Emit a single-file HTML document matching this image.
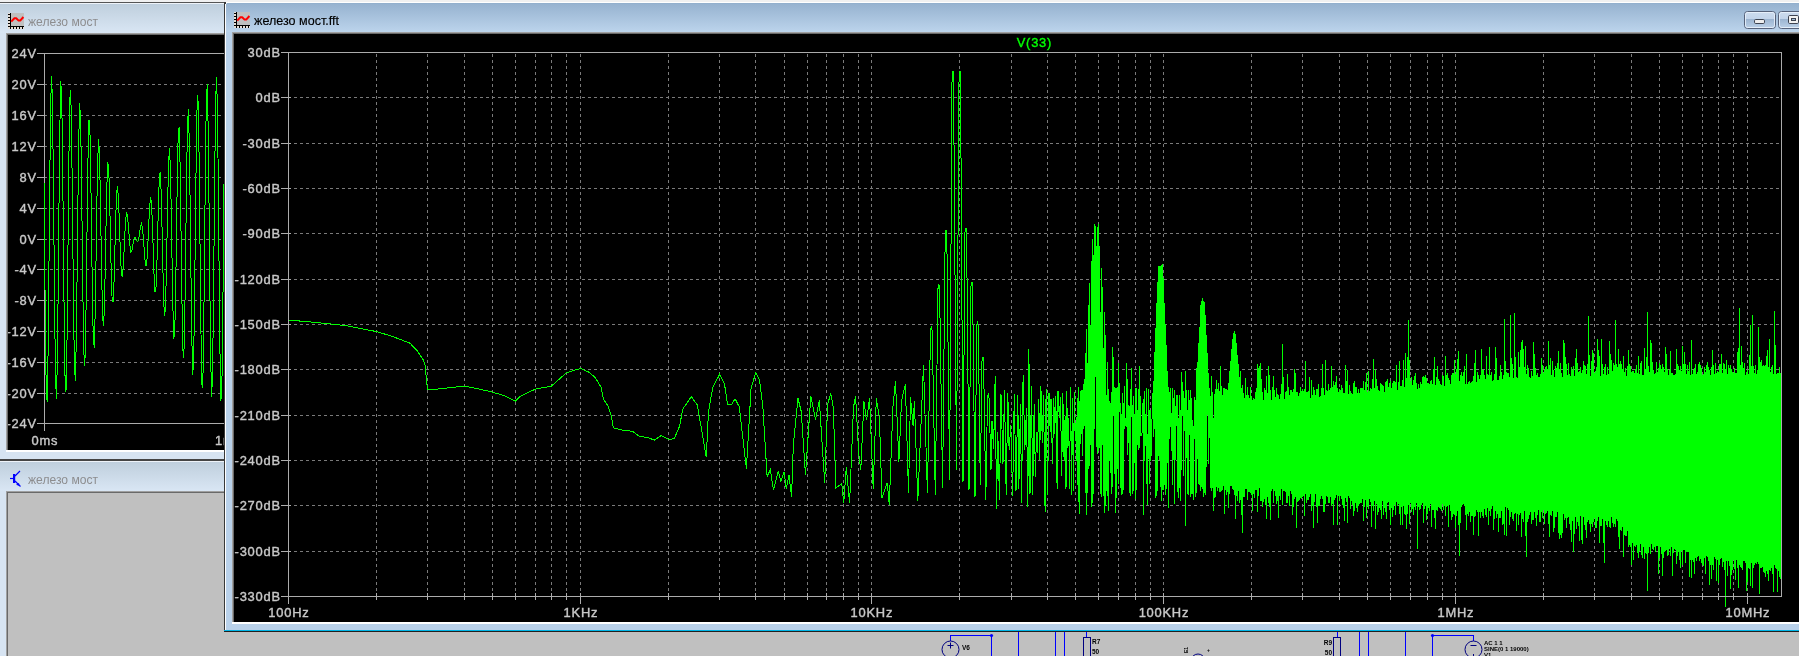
<!DOCTYPE html><html><head><meta charset="utf-8"><style>*{margin:0;padding:0}html,body{width:1799px;height:656px;overflow:hidden;background:#c0c0c0}svg{display:block;will-change:transform}</style></head><body>
<svg width="1799" height="656" viewBox="0 0 1799 656" font-family="'Liberation Sans', sans-serif">
<defs>
<linearGradient id="gAct" x1="0" y1="0" x2="0" y2="1"><stop offset="0" stop-color="#8fadcb"/><stop offset="0.04" stop-color="#97b3d0"/><stop offset="1" stop-color="#bcd4ec"/></linearGradient>
<linearGradient id="gIna" x1="0" y1="0" x2="0" y2="1"><stop offset="0" stop-color="#bfcfdd"/><stop offset="1" stop-color="#d9e6f4"/></linearGradient>
<clipPath id="cL"><rect x="8" y="35" width="216" height="415"/></clipPath>
<clipPath id="cF"><rect x="234" y="34" width="1565" height="588"/></clipPath>
</defs>
<rect x="0" y="0" width="1799" height="656" fill="#c0c0c0" />
<rect x="0" y="0" width="1799" height="2" fill="#f0f0f0" />
<rect x="0" y="2" width="224" height="458" fill="#d7e4f2" />
<rect x="0" y="2" width="224" height="1" fill="#555555" />
<rect x="0" y="3" width="224" height="1" fill="#eef3f9" />
<rect x="0" y="4" width="224" height="29" fill="url(#gIna)" />
<rect x="6" y="33" width="218" height="1" fill="#a0a0a0" />
<rect x="6" y="34" width="218" height="1" fill="#696969" />
<rect x="6" y="33" width="1" height="417" fill="#a0a0a0" />
<rect x="7" y="34" width="1" height="416" fill="#696969" />
<rect x="8" y="35" width="216" height="415" fill="#000000" />
<rect x="6" y="450" width="218" height="2" fill="#ffffff" />
<rect x="0" y="459" width="224" height="2" fill="#454545" />
<g clip-path="url(#cL)">
<path d="M45 84.5H224M45 115.5H224M45 146.5H224M45 177.5H224M45 208.5H224M45 239.5H224M45 269.5H224M45 300.5H224M45 331.5H224M45 362.5H224M45 393.5H224" stroke="#7a7a7a" stroke-width="1" stroke-dasharray="3 3" stroke-dashoffset="-5" shape-rendering="crispEdges" fill="none"/>
<path d="M44.5 53V431M44 53.5H224M44 423.5H224" stroke="#acacac" stroke-width="1" fill="none" shape-rendering="crispEdges"/>
<path d="M37 53.5H44M37 84.5H44M37 115.5H44M37 146.5H44M37 177.5H44M37 208.5H44M37 239.5H44M37 269.5H44M37 300.5H44M37 331.5H44M37 362.5H44M37 393.5H44M37 423.5H44" stroke="#acacac" stroke-width="1" shape-rendering="crispEdges"/>
<text x="36.80" y="58" font-size="13.6" fill="#c8c8c8" stroke="#c8c8c8" stroke-width="0.4" text-anchor="end" letter-spacing="0.8" transform="translate(36.80 0) scale(0.95 1) translate(-36.80 0)">24V</text>
<text x="36.80" y="89" font-size="13.6" fill="#c8c8c8" stroke="#c8c8c8" stroke-width="0.4" text-anchor="end" letter-spacing="0.8" transform="translate(36.80 0) scale(0.95 1) translate(-36.80 0)">20V</text>
<text x="36.80" y="120" font-size="13.6" fill="#c8c8c8" stroke="#c8c8c8" stroke-width="0.4" text-anchor="end" letter-spacing="0.8" transform="translate(36.80 0) scale(0.95 1) translate(-36.80 0)">16V</text>
<text x="36.80" y="151" font-size="13.6" fill="#c8c8c8" stroke="#c8c8c8" stroke-width="0.4" text-anchor="end" letter-spacing="0.8" transform="translate(36.80 0) scale(0.95 1) translate(-36.80 0)">12V</text>
<text x="36.80" y="182" font-size="13.6" fill="#c8c8c8" stroke="#c8c8c8" stroke-width="0.4" text-anchor="end" letter-spacing="0.8" transform="translate(36.80 0) scale(0.95 1) translate(-36.80 0)">8V</text>
<text x="36.80" y="213" font-size="13.6" fill="#c8c8c8" stroke="#c8c8c8" stroke-width="0.4" text-anchor="end" letter-spacing="0.8" transform="translate(36.80 0) scale(0.95 1) translate(-36.80 0)">4V</text>
<text x="36.80" y="244" font-size="13.6" fill="#c8c8c8" stroke="#c8c8c8" stroke-width="0.4" text-anchor="end" letter-spacing="0.8" transform="translate(36.80 0) scale(0.95 1) translate(-36.80 0)">0V</text>
<text x="36.80" y="274" font-size="13.6" fill="#c8c8c8" stroke="#c8c8c8" stroke-width="0.4" text-anchor="end" letter-spacing="0.8" transform="translate(36.80 0) scale(0.95 1) translate(-36.80 0)">-4V</text>
<text x="36.80" y="305" font-size="13.6" fill="#c8c8c8" stroke="#c8c8c8" stroke-width="0.4" text-anchor="end" letter-spacing="0.8" transform="translate(36.80 0) scale(0.95 1) translate(-36.80 0)">-8V</text>
<text x="36.80" y="336" font-size="13.6" fill="#c8c8c8" stroke="#c8c8c8" stroke-width="0.4" text-anchor="end" letter-spacing="0.8" transform="translate(36.80 0) scale(0.95 1) translate(-36.80 0)">-12V</text>
<text x="36.80" y="367" font-size="13.6" fill="#c8c8c8" stroke="#c8c8c8" stroke-width="0.4" text-anchor="end" letter-spacing="0.8" transform="translate(36.80 0) scale(0.95 1) translate(-36.80 0)">-16V</text>
<text x="36.80" y="398" font-size="13.6" fill="#c8c8c8" stroke="#c8c8c8" stroke-width="0.4" text-anchor="end" letter-spacing="0.8" transform="translate(36.80 0) scale(0.95 1) translate(-36.80 0)">-20V</text>
<text x="36.80" y="428" font-size="13.6" fill="#c8c8c8" stroke="#c8c8c8" stroke-width="0.4" text-anchor="end" letter-spacing="0.8" transform="translate(36.80 0) scale(0.95 1) translate(-36.80 0)">-24V</text>
<text x="44.90" y="445" font-size="13.6" fill="#c8c8c8" stroke="#c8c8c8" stroke-width="0.4" text-anchor="middle" letter-spacing="0.8" transform="translate(44.90 0) scale(0.95 1) translate(-44.90 0)">0ms</text>
<text x="215.00" y="445" font-size="13.6" fill="#c8c8c8" stroke="#c8c8c8" stroke-width="0.4" text-anchor="start" letter-spacing="0.8" transform="translate(215.00 0) scale(0.95 1) translate(-215.00 0)">1ms</text>
<path d="M44.00 180.94 45.05 294.26 46.09 381.68 47.14 402.20 48.19 346.24 49.23 240.09 50.28 133.56 51.33 76.52 52.37 95.52 53.42 181.39 54.47 293.66 55.51 379.71 56.56 399.46 57.61 344.11 58.65 240.06 59.70 136.27 60.75 81.19 61.79 100.08 62.84 183.39 63.89 291.59 64.93 373.95 65.98 392.39 67.03 339.15 68.07 240.00 69.12 141.74 70.17 90.10 71.21 108.37 72.26 186.88 73.31 288.09 74.35 364.54 75.40 381.18 76.45 331.49 77.49 239.90 78.54 149.83 79.59 103.03 80.63 120.18 81.68 191.77 82.73 283.26 83.77 351.74 84.82 366.13 85.87 321.32 86.91 239.77 87.96 160.32 89.01 119.62 90.05 135.19 91.10 197.94 92.15 277.23 93.19 335.89 94.24 347.65 95.29 308.93 96.33 239.62 97.38 172.93 98.43 139.42 99.47 152.99 100.52 205.20 101.57 270.16 102.61 317.42 103.66 326.23 104.71 294.64 105.75 239.45 106.80 187.31 107.85 161.90 108.89 173.11 109.94 213.37 110.99 262.25 112.03 296.84 113.08 302.45 114.13 278.85 115.17 239.26 116.22 203.09 117.27 186.46 118.31 195.00 119.36 222.22 120.41 253.71 121.45 274.69 122.50 276.95 123.55 261.98 124.59 239.06 125.64 219.82 126.69 212.42 127.73 218.07 128.78 231.52 129.83 244.76 130.87 251.57 131.92 250.43 132.97 244.49 134.01 238.84 135.06 237.07 136.11 239.10 137.15 241.70 138.20 241.02 139.25 235.66 140.29 228.10 141.34 223.59 142.39 226.84 143.43 238.63 144.48 254.36 145.53 265.77 146.57 265.25 147.62 250.46 148.67 226.64 149.71 204.93 150.76 197.16 151.81 209.51 152.85 238.43 153.90 271.24 154.95 291.72 155.99 288.09 157.04 259.58 158.09 217.94 159.13 182.67 160.18 171.86 161.23 192.98 162.27 238.23 163.32 287.24 164.37 316.23 165.41 309.60 166.46 268.15 167.51 209.81 168.55 161.92 169.60 148.36 170.65 177.68 171.69 238.05 172.74 301.93 173.79 338.66 174.83 329.20 175.88 275.92 176.93 202.46 177.97 143.25 179.02 127.30 180.07 164.03 181.11 237.89 182.16 314.92 183.21 358.40 184.25 346.36 185.30 282.69 186.35 196.09 187.39 127.15 188.44 109.25 189.49 152.39 190.53 237.75 191.58 325.86 192.63 374.91 193.67 360.62 194.72 288.28 195.77 190.88 196.81 114.06 197.86 94.69 198.91 143.08 199.95 237.64 201.00 334.45 202.05 387.75 203.09 371.60 204.14 292.53 205.19 186.95 206.23 104.34 207.28 84.02 208.33 136.36 209.37 237.56 210.42 340.46 211.47 396.57 212.51 378.99 213.56 295.33 214.61 184.42 215.65 98.25 216.70 77.52 217.75 132.40 218.79 237.52 219.84 343.73 220.89 401.13 221.93 382.60 222.98 296.61 224.03 183.36 225.07 95.94" stroke="#00ff00" stroke-width="1" fill="none" shape-rendering="crispEdges"/>
</g>
<rect x="0" y="461" width="224" height="195" fill="#d7e4f2" />
<rect x="0" y="461" width="224" height="1" fill="#eef3f9" />
<rect x="0" y="462" width="224" height="29" fill="url(#gIna)" />
<rect x="6" y="491" width="218" height="1" fill="#a0a0a0" />
<rect x="6" y="492" width="218" height="1" fill="#696969" />
<rect x="6" y="491" width="1" height="165" fill="#a0a0a0" />
<rect x="7" y="492" width="1" height="164" fill="#696969" />
<rect x="8" y="493" width="216" height="163" fill="#c0c0c0" />
<rect x="224" y="2" width="1575" height="630" fill="#b9d1ea" />
<rect x="226" y="2" width="1573" height="1" fill="#ffffff" />
<rect x="224" y="4" width="1" height="628" fill="#383838" />
<rect x="225" y="4" width="1" height="627" fill="#ffffff" />
<rect x="226" y="3" width="1573" height="29" fill="url(#gAct)" />
<rect x="224" y="2" width="2" height="2" fill="#3a3a3a" />
<rect x="226" y="3" width="1" height="1" fill="#e0e8f0" />
<rect x="224" y="630" width="1575" height="1" fill="#00b4e6" />
<rect x="224" y="631" width="1575" height="1" fill="#202020" />
<rect x="232" y="32" width="1567" height="1" fill="#a0a0a0" />
<rect x="232" y="33" width="1567" height="1" fill="#696969" />
<rect x="232" y="32" width="1" height="590" fill="#a0a0a0" />
<rect x="233" y="33" width="1" height="589" fill="#696969" />
<rect x="234" y="34" width="1565" height="588" fill="#000000" />
<rect x="232" y="622" width="1567" height="2" fill="#ffffff" />
<g clip-path="url(#cF)">
<path d="M289 97.5H1781M289 143.5H1781M289 188.5H1781M289 233.5H1781M289 279.5H1781M289 324.5H1781M289 369.5H1781M289 415.5H1781M289 460.5H1781M289 505.5H1781M289 551.5H1781" stroke="#7a7a7a" stroke-width="1" stroke-dasharray="3 3" stroke-dashoffset="-5" shape-rendering="crispEdges" fill="none"/>
<path d="M376.5 54V596M427.5 54V596M464.5 54V596M492.5 54V596M515.5 54V596M535.5 54V596M551.5 54V596M566.5 54V596M580.5 54V596M668.5 54V596M719.5 54V596M755.5 54V596M784.5 54V596M807.5 54V596M826.5 54V596M843.5 54V596M858.5 54V596M871.5 54V596M959.5 54V596M1011.5 54V596M1047.5 54V596M1075.5 54V596M1098.5 54V596M1118.5 54V596M1135.5 54V596M1150.5 54V596M1163.5 54V596M1251.5 54V596M1302.5 54V596M1339.5 54V596M1367.5 54V596M1390.5 54V596M1410.5 54V596M1427.5 54V596M1442.5 54V596M1455.5 54V596M1543.5 54V596M1594.5 54V596M1631.5 54V596M1659.5 54V596M1682.5 54V596M1702.5 54V596M1718.5 54V596M1733.5 54V596M1747.5 54V596" stroke="#7a7a7a" stroke-width="1" stroke-dasharray="3 3" shape-rendering="crispEdges" fill="none"/>
<path d="M288.4 320.4 295.7 320.7 307.9 321.7 330.7 324.0 346.0 325.7 361.2 328.6 376.5 331.6 391.7 336.2 410.0 343.2 417.6 351.2 423.0 359.5 425.0 364.9 426.5 380.1 427.5 390.0 432.9 389.6 449.6 387.7 463.4 386.2 469.4 387.0 480.0 389.3 492.2 392.0 504.4 395.8 515.4 401.2 520.4 396.3 534.9 389.3 542.5 387.7 551.3 386.2 566.1 373.0 573.0 370.7 580.6 368.4 589.0 372.2 595.1 377.5 601.2 387.4 603.5 399.6 608.0 405.7 611.1 414.9 613.4 427.8 622.5 430.1 632.4 431.3 639.3 436.2 647.7 437.7 654.5 440.0 661.4 435.5 669.0 439.6 674.3 438.5 679.6 426.1 682.8 409.1 691.3 396.7 697.3 404.8 706.3 457.1 708.4 412.3 712.7 387.7 719.5 374.5 724.4 383.5 727.6 404.4 731.4 404.8 735.1 398.8 739.3 406.9 746.4 468.8 751.1 387.7 755.8 372.8 759.6 380.3 762.8 405.9 767.1 476.3 770.3 469.9 773.5 490.1 778.2 470.9 780.9 481.6 784.1 472.0 786.3 489.1 789.0 475.2 791.6 496.5 793.3 445.3 798.0 398.4 801.2 411.2 805.5 475.2 810.8 395.8 815.5 419.7 819.3 400.5 824.7 482.7 827.6 404.8 830.7 393.1 833.3 407.4 835.9 487.7 841.8 483.9 843.7 503.3 846.3 467.0 849.6 503.3 853.5 407.4 855.6 395.7 858.7 454.0 860.8 469.6 863.9 400.9 866.5 420.4 869.6 398.3 873.2 489.0 876.3 398.3 879.4 417.8 882.0 498.1 887.2 482.6 889.3 504.6 892.9 407.4 895.5 381.5 898.9 461.8 901.5 400.9 905.4 384.1 908.5 492.9 910.5 397.0 913.1 425.5 914.4 400.9 917.8 500.7 923.5 364.6 927.4 492.9 930.6 329.8 931.6 325.8 932.2 331.8 935.3 495.0 938.0 288.6 939.0 284.6 939.6 290.6 942.6 488.0 945.2 233.6 946.2 229.6 946.8 235.6 949.6 480.0 952.0 82.6 953.0 70.6 953.6 90.6 956.5 470.0 959.0 82.6 960.0 70.6 960.6 90.6 963.0 482.0 965.0 232.0 966.0 228.0 966.6 234.0 969.0 490.0 971.0 285.8 972.0 281.8 972.6 287.8 975.0 497.0 976.7 325.6 977.7 321.6 978.3 327.6 980.3 485.0 982.0 361.4 983.0 357.4 983.6 363.4 985.8 500.0 987.5 397.0 988.5 393.0 989.1 399.0 991.0 470.0 992.0 420.7 993.6 448.8 995.2 375.8 996.5 509.3 997.8 432.0 999.5 500.1 1001.0 394.0 1003.0 463.6 1004.5 390.3 1006.2 495.1 1007.8 393.2 1009.1 449.8 1010.8 425.2 1012.6 496.3 1014.3 393.9 1016.0 490.6 1017.8 394.8 1018.8 489.4 1020.5 403.8 1021.5 502.5 1023.1 374.9 1024.8 450.0 1026.5 407.8 1027.8 506.7 1028.9 349.4 1030.0 493.7 1031.4 386.4 1032.7 495.2 1034.2 404.0 1035.4 477.0 1036.5 432.2 1037.5 453.3 1038.8 399.5 1039.7 459.8 1040.9 385.9 1042.3 442.7 1043.5 395.3 1045.1 511.9 1046.1 388.6 1047.5 495.3 1049.0 392.7 1050.2 432.0 1051.0 398.6 1052.5 464.2 1053.8 398.0 1054.7 434.1 1055.8 395.9 1057.1 488.7 1058.0 391.0 1059.3 418.2 1060.5 396.9 1061.7 476.1 1062.8 392.7 1064.1 460.6 1065.1 416.0 1066.0 489.0 1066.7 391.2 1067.8 448.4 1068.7 417.9 1069.5 488.6 1070.6 386.8 1071.6 494.8 1072.4 398.0 1073.4 491.2 1074.3 391.9 1075.2 440.6 1076.3 416.7 1077.4 485.0 1078.1 387.4 1079.1 513.9 1080.1 390.8 1080.8 443.5 1082.0 389.6 1082.8 455.5 1083.4 384.4 1084.3 426.4 1085.4 353.3 1086.1 514.5 1086.8 328.9 1087.8 492.9 1088.4 305.0 1089.0 468.6 1089.8 282.6 1090.6 444.5 1091.3 261.2 1092.0 506.5 1092.8 238.8 1093.4 493.6 1094.1 224.0 1094.8 428.8 1095.6 226.4 1096.2 447.1 1097.1 226.9 1097.7 453.8 1098.5 224.3 1099.0 451.0 1099.8 246.0 1100.3 494.0 1101.2 268.5 1101.9 496.5 1102.4 286.9 1103.3 495.6 1104.2 311.8 1105.0 513.0 1105.7 335.4 1106.5 491.0 1107.3 361.8 1108.1 511.3 1108.9 388.8 1109.6 460.5 1110.4 403.2 1111.2 493.7 1111.8 391.6 1112.3 486.8 1112.9 347.5 1113.7 415.5 1114.6 387.1 1115.2 512.8 1116.0 388.4 1116.8 498.1 1117.5 387.1 1118.1 484.0 1118.7 363.0 1119.5 412.1 1120.3 402.9 1121.0 488.0 1121.5 414.3 1122.0 495.4 1122.8 392.9 1123.6 490.3 1124.1 385.9 1124.8 429.0 1125.3 420.8 1126.1 418.1 1126.6 363.5 1127.2 454.8 1127.8 379.1 1128.3 442.9 1129.1 435.2 1129.6 492.8 1130.1 388.8 1130.6 495.9 1131.2 368.3 1131.7 416.8 1132.3 405.1 1133.0 493.5 1133.5 396.0 1134.1 417.2 1134.7 423.6 1135.3 499.3 1136.0 388.5 1136.6 490.4 1137.1 410.0 1137.7 444.6 1138.4 389.0 1139.0 449.7 1139.7 366.3 1140.3 423.7 1140.9 434.7 1141.4 433.8 1141.9 435.5 1142.6 418.6 1143.1 399.4 1143.8 514.8 1144.3 390.7 1144.8 454.2 1145.3 413.9 1145.9 446.2 1146.6 388.2 1147.1 505.4 1147.7 433.7 1148.3 459.3 1148.8 389.2 1149.5 484.1 1150.0 409.7 1150.6 460.7 1151.1 430.3 1151.6 456.2 1152.2 402.6 1152.7 413.3 1153.2 380.8 1153.8 436.7 1154.3 352.2 1154.9 429.0 1155.5 328.5 1156.0 497.9 1156.5 303.1 1157.0 495.8 1157.5 282.5 1158.0 460.1 1158.6 266.1 1159.1 460.4 1159.6 266.4 1160.1 486.8 1160.6 265.8 1161.1 500.9 1161.6 264.6 1162.1 489.8 1162.6 264.0 1163.2 489.9 1163.7 278.0 1164.2 485.2 1164.7 302.9 1165.2 495.3 1165.7 323.7 1166.2 489.4 1166.7 345.4 1167.2 462.8 1167.7 370.9 1168.2 508.1 1168.8 387.3 1169.3 439.1 1169.8 392.0 1170.3 427.4 1170.8 388.2 1171.3 448.3 1171.8 427.4 1172.3 484.8 1172.8 387.6 1173.3 413.2 1173.8 429.3 1174.3 504.3 1174.9 389.6 1175.4 459.9 1175.9 407.4 1176.4 426.0 1176.9 394.7 1177.4 492.1 1177.9 394.6 1178.4 497.9 1178.9 427.8 1179.4 487.6 1179.9 395.1 1180.4 500.7 1180.9 409.8 1181.4 470.1 1181.9 371.8 1182.4 416.1 1182.9 383.5 1183.4 476.3 1183.9 390.7 1184.4 418.3 1184.9 403.9 1185.4 525.8 1185.9 371.3 1186.4 457.5 1186.9 396.8 1187.4 494.4 1187.9 410.0 1188.4 494.5 1188.9 389.6 1189.4 435.3 1189.9 411.0 1190.4 497.2 1190.9 390.5 1191.4 493.7 1191.9 397.7 1192.4 494.1 1192.9 433.8 1193.4 499.9 1193.9 426.2 1194.4 438.6 1194.9 397.4 1195.4 496.8 1195.9 400.2 1196.4 492.8 1196.9 367.8 1197.4 458.6 1197.9 361.7 1198.4 484.4 1198.9 343.4 1199.4 485.3 1199.9 327.1 1200.4 490.9 1200.9 305.0 1201.4 487.1 1201.9 301.5 1202.4 489.1 1202.9 298.1 1203.4 496.8 1203.9 300.7 1204.4 493.3 1204.9 301.7 1205.4 495.2 1205.9 315.5 1206.4 467.3 1206.9 334.7 1207.4 414.9 1207.9 355.2 1208.4 464.1 1208.9 373.5 1209.4 438.3 1209.9 391.4 1210.4 487.8 1210.9 395.9 1211.4 491.1 1211.9 376.1 1212.4 488.3 1212.9 391.9 1213.4 510.6 1213.9 421.2 1214.4 498.1 1214.9 393.8 1215.4 496.6 1215.9 389.1 1216.4 486.7 1216.9 379.6 1217.4 491.0 1217.9 389.4 1218.4 488.2 1218.9 383.1 1219.4 491.8 1219.9 391.2 1220.4 491.8 1220.9 366.3 1221.4 490.6 1221.9 386.2 1222.4 489.6 1222.9 395.5 1223.4 486.3 1223.9 388.3 1224.4 513.8 1224.9 387.7 1225.4 490.4 1225.9 388.7 1226.4 495.0 1226.9 389.1 1227.4 491.9 1227.9 389.6 1228.4 508.2 1228.9 382.7 1229.4 493.7 1229.9 371.1 1230.4 486.3 1230.9 361.2 1231.4 486.4 1231.9 349.0 1232.4 489.0 1232.9 338.8 1233.4 489.9 1233.9 332.6 1234.4 495.0 1234.9 331.2 1235.4 519.0 1235.9 334.1 1236.4 496.0 1236.9 343.1 1237.4 501.0 1237.9 355.3 1238.4 490.6 1238.9 363.6 1239.4 502.6 1239.9 377.3 1240.4 500.3 1240.9 371.0 1241.4 514.7 1241.9 387.8 1242.4 532.6 1242.9 385.3 1243.4 496.9 1243.9 393.0 1244.4 496.8 1244.9 398.0 1245.4 489.2 1245.9 377.8 1246.4 488.9 1246.9 395.4 1247.4 500.2 1247.9 387.4 1248.4 491.7 1248.9 395.0 1249.4 492.4 1249.9 397.9 1250.4 493.1 1250.9 387.2 1251.4 495.2 1251.9 396.2 1252.4 511.2 1252.9 399.7 1253.4 493.9 1253.9 397.8 1254.4 498.2 1254.9 399.1 1255.4 490.1 1255.9 391.8 1256.4 489.6 1256.9 388.2 1257.4 512.3 1257.9 363.6 1258.4 495.6 1258.9 367.6 1259.4 488.2 1259.9 366.4 1260.4 500.5 1260.9 363.3 1261.4 501.2 1261.9 379.5 1262.4 506.5 1262.9 392.4 1263.4 501.8 1263.9 400.0 1264.4 498.6 1264.9 388.5 1265.4 504.7 1265.9 389.6 1266.4 519.0 1266.9 376.1 1267.4 497.0 1267.9 393.5 1268.4 503.3 1268.9 366.0 1269.4 507.2 1269.9 375.1 1270.4 520.0 1270.9 389.8 1271.4 491.3 1271.9 399.8 1272.4 489.3 1272.9 387.1 1273.4 502.6 1273.9 376.5 1274.4 490.6 1274.9 389.7 1275.4 495.6 1275.9 396.9 1276.4 504.0 1276.9 387.7 1277.4 500.9 1277.9 393.6 1278.4 517.9 1278.9 395.3 1279.4 496.2 1279.9 399.1 1280.4 499.6 1280.9 393.9 1281.4 489.4 1281.9 384.4 1282.4 505.0 1282.9 344.4 1283.4 490.8 1283.9 383.7 1284.4 491.1 1284.9 398.6 1285.4 491.8 1285.9 392.4 1286.4 502.8 1286.9 391.1 1287.4 502.5 1287.9 373.9 1288.4 495.7 1288.9 387.2 1289.4 506.4 1289.9 395.0 1290.4 490.5 1290.9 389.9 1291.4 493.6 1291.9 390.0 1292.4 514.9 1292.9 392.5 1293.4 506.7 1293.9 389.2 1294.4 499.0 1294.9 368.7 1295.4 497.1 1295.9 373.4 1296.4 527.5 1296.9 392.5 1297.4 501.5 1297.9 391.7 1298.4 501.1 1298.9 395.8 1299.4 500.4 1299.9 392.6 1300.4 497.7 1300.9 387.0 1301.4 499.3 1301.9 391.0 1302.4 496.6 1302.9 389.2 1303.4 495.8 1303.9 391.2 1304.4 515.8 1304.9 389.5 1305.4 494.4 1305.9 361.2 1306.4 502.5 1306.9 392.0 1307.4 500.1 1307.9 392.0 1308.4 499.7 1308.9 391.4 1309.4 496.7 1309.9 376.9 1310.4 493.6 1310.9 398.3 1311.4 511.4 1311.9 380.0 1312.4 506.2 1312.9 395.3 1313.4 528.0 1313.9 386.9 1314.4 501.5 1314.9 389.8 1315.4 494.0 1315.9 395.5 1316.4 506.9 1316.9 388.9 1317.4 523.0 1317.9 389.2 1318.4 506.3 1318.9 384.4 1319.4 505.5 1319.9 397.1 1320.4 498.5 1320.9 395.8 1321.4 495.6 1321.9 387.6 1322.4 498.6 1322.9 363.6 1323.4 512.4 1323.9 388.1 1324.4 512.3 1324.9 395.0 1325.4 503.7 1325.9 360.4 1326.4 495.5 1326.9 391.3 1327.4 496.7 1327.9 390.6 1328.4 503.0 1328.9 384.1 1329.4 503.2 1329.9 389.8 1330.4 497.2 1330.9 388.4 1331.4 506.2 1331.9 366.4 1332.4 503.5 1332.9 387.5 1333.4 524.8 1333.9 381.5 1334.4 499.8 1334.9 384.9 1335.4 498.1 1335.9 382.4 1336.4 495.2 1336.9 376.4 1337.4 525.2 1337.9 387.7 1338.4 496.1 1338.9 391.8 1339.4 501.3 1339.9 389.2 1340.4 495.7 1340.9 389.6 1341.4 498.6 1341.9 384.7 1342.4 504.6 1342.9 388.0 1343.4 507.7 1343.9 393.1 1344.4 521.4 1344.9 393.2 1345.4 498.4 1345.9 364.7 1346.4 502.2 1346.9 381.2 1347.4 522.6 1347.9 369.6 1348.4 496.0 1348.9 394.4 1349.4 497.9 1349.9 385.3 1350.4 509.0 1350.9 391.5 1351.4 500.6 1351.9 392.6 1352.4 505.0 1352.9 394.2 1353.4 515.7 1353.9 383.1 1354.4 511.2 1354.9 380.8 1355.4 502.5 1355.9 386.6 1356.4 508.2 1356.9 386.8 1357.4 512.3 1357.9 393.2 1358.4 505.5 1358.9 389.0 1359.4 503.7 1359.9 392.7 1360.4 503.3 1360.9 388.4 1361.4 502.7 1361.9 387.8 1362.4 498.6 1362.9 387.8 1363.4 520.6 1363.9 381.0 1364.4 507.4 1364.9 390.0 1365.4 499.9 1365.9 381.8 1366.4 518.3 1366.9 372.6 1367.4 506.4 1367.9 391.9 1368.4 508.5 1368.9 370.6 1369.4 498.5 1369.9 390.8 1370.4 501.6 1370.9 387.6 1371.4 526.6 1371.9 389.0 1372.4 505.8 1372.9 379.5 1373.4 510.6 1373.9 359.5 1374.4 500.7 1374.9 387.6 1375.4 528.6 1375.9 370.3 1376.4 503.6 1376.9 379.2 1377.4 515.4 1377.9 385.8 1378.4 512.2 1378.9 389.6 1379.4 507.8 1379.9 390.9 1380.4 509.7 1380.9 383.5 1381.4 519.2 1381.9 383.7 1382.4 501.1 1382.9 384.7 1383.4 514.5 1383.9 386.1 1384.4 507.6 1384.9 392.1 1385.4 511.7 1385.9 382.0 1386.4 518.5 1386.9 380.9 1387.4 502.5 1387.9 379.1 1388.4 501.8 1388.9 386.9 1389.4 510.4 1389.9 382.6 1390.4 525.3 1390.9 381.4 1391.4 508.0 1391.9 387.8 1392.4 516.8 1392.9 383.5 1393.4 509.5 1393.9 381.1 1394.4 504.8 1394.9 381.3 1395.4 514.7 1395.9 382.4 1396.4 501.9 1396.9 365.2 1397.4 505.9 1397.9 390.1 1398.4 504.2 1398.9 381.9 1399.4 513.6 1399.9 361.5 1400.4 525.2 1400.9 385.7 1401.4 507.1 1401.9 385.8 1402.4 525.4 1402.9 380.5 1403.4 505.8 1403.9 360.3 1404.4 513.6 1404.9 387.5 1405.4 515.2 1405.9 353.1 1406.4 528.6 1406.9 377.6 1407.4 513.7 1407.9 357.3 1408.4 504.7 1408.9 320.5 1409.4 524.2 1409.9 359.6 1410.4 503.1 1410.9 380.9 1411.4 511.8 1411.9 376.9 1412.4 509.4 1412.9 384.9 1413.4 515.4 1413.9 380.2 1414.4 507.1 1414.9 375.7 1415.4 510.3 1415.9 372.7 1416.4 502.5 1416.9 383.1 1417.4 548.5 1417.9 389.3 1418.4 507.2 1418.9 383.8 1419.4 509.6 1419.9 387.9 1420.4 508.7 1420.9 382.5 1421.4 505.4 1421.9 383.9 1422.4 502.7 1422.9 376.6 1423.4 522.6 1423.9 376.0 1424.4 508.5 1424.9 376.8 1425.4 505.6 1425.9 374.8 1426.4 519.5 1426.9 377.9 1427.4 514.4 1427.9 383.1 1428.4 507.6 1428.9 383.4 1429.4 510.6 1429.9 384.2 1430.4 503.5 1430.9 381.1 1431.4 527.2 1431.9 379.8 1432.4 509.5 1432.9 384.3 1433.4 510.4 1433.9 368.6 1434.4 518.3 1434.9 357.4 1435.4 529.2 1435.9 385.1 1436.4 510.1 1436.9 377.2 1437.4 510.6 1437.9 366.2 1438.4 506.5 1438.9 378.6 1439.4 508.1 1439.9 381.1 1440.4 508.7 1440.9 384.3 1441.4 511.4 1441.9 385.4 1442.4 503.8 1442.9 375.5 1443.4 510.1 1443.9 375.9 1444.4 506.1 1444.9 386.1 1445.4 516.0 1445.9 356.0 1446.4 506.6 1446.9 374.8 1447.4 505.5 1447.9 373.0 1448.4 527.2 1448.9 378.5 1449.4 505.2 1449.9 379.7 1450.4 510.5 1450.9 384.4 1451.4 520.1 1451.9 375.4 1452.4 517.2 1452.9 372.8 1453.4 514.1 1453.9 373.0 1454.4 514.8 1454.9 359.6 1455.4 528.2 1455.9 374.1 1456.4 515.6 1456.9 369.5 1457.4 511.4 1457.9 358.8 1458.4 525.2 1458.9 350.6 1459.4 555.6 1459.9 381.1 1460.4 522.8 1460.9 375.4 1461.4 507.3 1461.9 372.1 1462.4 504.7 1462.9 375.9 1463.4 504.3 1463.9 372.3 1464.4 506.3 1464.9 365.7 1465.4 515.4 1465.9 383.6 1466.4 529.6 1466.9 353.6 1467.4 513.8 1467.9 383.8 1468.4 515.7 1468.9 381.6 1469.4 511.9 1469.9 381.5 1470.4 522.1 1470.9 383.1 1471.4 515.5 1471.9 381.9 1472.4 516.3 1472.9 381.3 1473.4 535.4 1473.9 376.5 1474.4 516.5 1474.9 363.5 1475.4 516.1 1475.9 350.2 1476.4 509.9 1476.9 382.4 1477.4 512.0 1477.9 372.0 1478.4 535.9 1478.9 374.6 1479.4 512.2 1479.9 378.9 1480.4 518.4 1480.9 374.8 1481.4 512.0 1481.9 349.4 1482.4 515.6 1482.9 369.8 1483.4 517.6 1483.9 369.9 1484.4 509.2 1484.9 375.0 1485.4 514.7 1485.9 378.7 1486.4 516.9 1486.9 356.5 1487.4 507.8 1487.9 374.2 1488.4 525.0 1488.9 374.9 1489.4 510.9 1489.9 346.8 1490.4 516.4 1490.9 375.1 1491.4 509.4 1491.9 372.5 1492.4 506.2 1492.9 381.5 1493.4 529.5 1493.9 379.6 1494.4 519.3 1494.9 373.7 1495.4 511.3 1495.9 347.2 1496.4 518.4 1496.9 358.1 1497.4 514.0 1497.9 379.7 1498.4 532.0 1498.9 380.4 1499.4 518.3 1499.9 376.3 1500.4 517.6 1500.9 365.4 1501.4 511.1 1501.9 372.1 1502.4 525.1 1502.9 378.7 1503.4 524.2 1503.9 375.3 1504.4 535.3 1504.9 318.8 1505.4 507.2 1505.9 372.8 1506.4 535.9 1506.9 371.7 1507.4 508.2 1507.9 373.3 1508.4 510.4 1508.9 373.0 1509.4 525.3 1509.9 377.3 1510.4 516.6 1510.9 315.3 1511.4 511.5 1511.9 370.9 1512.4 519.2 1512.9 364.0 1513.4 520.5 1513.9 377.9 1514.4 513.8 1514.9 313.4 1515.4 512.9 1515.9 378.0 1516.4 531.4 1516.9 377.2 1517.4 514.3 1517.9 378.4 1518.4 525.3 1518.9 351.8 1519.4 515.2 1519.9 366.8 1520.4 512.6 1520.9 350.2 1521.4 537.4 1521.9 342.0 1522.4 518.7 1522.9 340.4 1523.4 522.0 1523.9 349.4 1524.4 510.9 1524.9 366.9 1525.4 535.8 1525.9 346.4 1526.4 556.6 1526.9 373.9 1527.4 522.3 1527.9 365.2 1528.4 518.8 1528.9 367.9 1529.4 515.1 1529.9 376.8 1530.4 511.8 1530.9 378.5 1531.4 523.6 1531.9 371.1 1532.4 520.4 1532.9 376.4 1533.4 519.6 1533.9 341.9 1534.4 511.9 1534.9 353.8 1535.4 518.4 1535.9 368.2 1536.4 526.0 1536.9 375.1 1537.4 515.3 1537.9 373.0 1538.4 510.2 1538.9 377.2 1539.4 521.5 1539.9 376.7 1540.4 521.9 1540.9 373.6 1541.4 511.8 1541.9 357.7 1542.4 517.5 1542.9 364.8 1543.4 510.4 1543.9 373.5 1544.4 524.3 1544.9 370.1 1545.4 513.5 1545.9 367.0 1546.4 512.7 1546.9 366.0 1547.4 511.4 1547.9 369.1 1548.4 524.2 1548.9 340.6 1549.4 537.3 1549.9 365.3 1550.4 514.6 1550.9 358.4 1551.4 516.0 1551.9 375.4 1552.4 511.1 1552.9 360.8 1553.4 531.6 1553.9 370.2 1554.4 527.8 1554.9 377.1 1555.4 517.2 1555.9 366.5 1556.4 516.5 1556.9 368.0 1557.4 511.8 1557.9 363.3 1558.4 532.7 1558.9 351.5 1559.4 538.8 1559.9 368.6 1560.4 535.3 1560.9 362.6 1561.4 538.1 1561.9 372.9 1562.4 533.3 1562.9 377.3 1563.4 513.7 1563.9 340.3 1564.4 520.3 1564.9 343.4 1565.4 517.5 1565.9 357.5 1566.4 527.7 1566.9 364.1 1567.4 517.7 1567.9 375.3 1568.4 517.2 1568.9 362.8 1569.4 523.8 1569.9 374.5 1570.4 530.1 1570.9 375.7 1571.4 542.0 1571.9 366.7 1572.4 521.4 1572.9 369.7 1573.4 552.0 1573.9 365.6 1574.4 533.9 1574.9 376.5 1575.4 517.4 1575.9 357.7 1576.4 528.9 1576.9 349.0 1577.4 522.4 1577.9 363.2 1578.4 526.2 1578.9 371.8 1579.4 540.6 1579.9 371.3 1580.4 515.7 1580.9 366.7 1581.4 539.6 1581.9 372.8 1582.4 544.0 1582.9 370.1 1583.4 516.9 1583.9 360.6 1584.4 524.5 1584.9 365.4 1585.4 530.3 1585.9 366.0 1586.4 538.2 1586.9 373.8 1587.4 521.7 1587.9 364.2 1588.4 519.8 1588.9 316.0 1589.4 523.7 1589.9 355.2 1590.4 532.2 1590.9 376.0 1591.4 524.4 1591.9 361.4 1592.4 526.7 1592.9 350.4 1593.4 521.9 1593.9 353.2 1594.4 517.7 1594.9 373.3 1595.4 527.8 1595.9 371.4 1596.4 527.6 1596.9 366.6 1597.4 521.1 1597.9 339.3 1598.4 517.0 1598.9 349.6 1599.4 543.0 1599.9 356.5 1600.4 525.7 1600.9 375.7 1601.4 525.5 1601.9 339.3 1602.4 519.1 1602.9 364.4 1603.4 543.1 1603.9 373.8 1604.4 562.9 1604.9 366.8 1605.4 521.1 1605.9 363.7 1606.4 525.0 1606.9 375.0 1607.4 526.8 1607.9 367.5 1608.4 521.1 1608.9 374.0 1609.4 526.9 1609.9 341.2 1610.4 527.5 1610.9 353.9 1611.4 517.1 1611.9 360.4 1612.4 522.5 1612.9 370.9 1613.4 527.2 1613.9 363.5 1614.4 523.8 1614.9 364.9 1615.4 526.9 1615.9 319.8 1616.4 518.6 1616.9 366.9 1617.4 520.5 1617.9 367.2 1618.4 537.0 1618.9 348.7 1619.4 548.9 1619.9 364.4 1620.4 530.0 1620.9 361.2 1621.4 531.3 1621.9 363.8 1622.4 527.2 1622.9 368.9 1623.4 557.1 1623.9 355.6 1624.4 535.0 1624.9 372.2 1625.4 536.0 1625.9 367.9 1626.4 535.5 1626.9 375.6 1627.4 530.7 1627.9 365.8 1628.4 547.2 1628.9 350.1 1629.4 544.8 1629.9 363.6 1630.4 546.9 1630.9 366.4 1631.4 564.8 1631.9 371.7 1632.4 542.7 1632.9 370.7 1633.4 559.5 1633.9 370.9 1634.4 545.7 1634.9 372.6 1635.4 547.2 1635.9 368.8 1636.4 545.1 1636.9 365.0 1637.4 553.4 1637.9 372.8 1638.4 558.3 1638.9 355.8 1639.4 551.1 1639.9 374.2 1640.4 543.9 1640.9 362.6 1641.4 555.0 1641.9 360.7 1642.4 558.4 1642.9 374.8 1643.4 547.2 1643.9 375.1 1644.4 558.6 1644.9 348.4 1645.4 553.1 1645.9 369.5 1646.4 554.3 1646.9 356.9 1647.4 590.5 1647.9 311.9 1648.4 552.8 1648.9 374.0 1649.4 546.6 1649.9 372.5 1650.4 553.6 1650.9 340.4 1651.4 544.3 1651.9 342.7 1652.4 549.3 1652.9 362.5 1653.4 549.7 1653.9 370.1 1654.4 546.7 1654.9 373.9 1655.4 551.9 1655.9 373.1 1656.4 545.7 1656.9 361.8 1657.4 546.1 1657.9 372.5 1658.4 573.8 1658.9 367.6 1659.4 557.7 1659.9 362.8 1660.4 547.1 1660.9 364.6 1661.4 553.6 1661.9 368.6 1662.4 575.6 1662.9 364.3 1663.4 558.3 1663.9 366.8 1664.4 552.4 1664.9 371.8 1665.4 550.9 1665.9 347.1 1666.4 550.3 1666.9 354.3 1667.4 555.7 1667.9 368.7 1668.4 554.7 1668.9 374.8 1669.4 549.3 1669.9 370.5 1670.4 556.1 1670.9 350.9 1671.4 546.9 1671.9 372.7 1672.4 576.0 1672.9 373.5 1673.4 552.8 1673.9 374.9 1674.4 549.4 1674.9 375.1 1675.4 549.8 1675.9 373.8 1676.4 564.4 1676.9 349.1 1677.4 555.5 1677.9 364.5 1678.4 551.5 1678.9 365.9 1679.4 559.9 1679.9 369.7 1680.4 568.4 1680.9 365.6 1681.4 550.8 1681.9 371.1 1682.4 565.0 1682.9 346.2 1683.4 550.4 1683.9 363.6 1684.4 550.4 1684.9 351.7 1685.4 563.3 1685.9 364.4 1686.4 551.7 1686.9 374.2 1687.4 552.4 1687.9 365.4 1688.4 551.9 1688.9 371.1 1689.4 576.9 1689.9 362.1 1690.4 560.0 1690.9 375.0 1691.4 577.5 1691.9 340.4 1692.4 560.0 1692.9 373.6 1693.4 561.8 1693.9 370.4 1694.4 574.3 1694.9 368.5 1695.4 558.2 1695.9 363.9 1696.4 561.2 1696.9 374.3 1697.4 557.2 1697.9 371.6 1698.4 556.0 1698.9 364.3 1699.4 561.4 1699.9 362.2 1700.4 559.4 1700.9 364.6 1701.4 562.6 1701.9 368.2 1702.4 564.6 1702.9 375.0 1703.4 565.5 1703.9 373.9 1704.4 558.0 1704.9 367.0 1705.4 574.0 1705.9 372.1 1706.4 555.7 1706.9 365.5 1707.4 556.5 1707.9 362.0 1708.4 560.6 1708.9 367.3 1709.4 585.4 1709.9 369.7 1710.4 565.1 1710.9 375.3 1711.4 579.2 1711.9 366.9 1712.4 564.7 1712.9 350.4 1713.4 570.0 1713.9 365.5 1714.4 556.9 1714.9 373.6 1715.4 559.4 1715.9 362.7 1716.4 580.7 1716.9 373.3 1717.4 560.1 1717.9 370.8 1718.4 583.4 1718.9 371.8 1719.4 564.9 1719.9 364.3 1720.4 559.1 1720.9 363.9 1721.4 557.6 1721.9 354.1 1722.4 566.8 1722.9 373.2 1723.4 562.3 1723.9 363.1 1724.4 569.8 1724.9 364.1 1725.4 606.6 1725.9 369.0 1726.4 561.3 1726.9 359.9 1727.4 576.0 1727.9 373.8 1728.4 560.8 1728.9 364.8 1729.4 565.7 1729.9 368.1 1730.4 588.5 1730.9 365.1 1731.4 575.3 1731.9 368.6 1732.4 569.9 1732.9 371.9 1733.4 559.9 1733.9 372.7 1734.4 569.3 1734.9 368.4 1735.4 580.0 1735.9 373.3 1736.4 560.0 1736.9 372.7 1737.4 567.9 1737.9 351.8 1738.4 588.2 1738.9 347.8 1739.4 565.0 1739.9 308.1 1740.4 567.0 1740.9 366.0 1741.4 568.2 1741.9 346.3 1742.4 569.6 1742.9 362.4 1743.4 560.7 1743.9 368.2 1744.4 561.3 1744.9 363.2 1745.4 562.8 1745.9 374.8 1746.4 591.1 1746.9 372.5 1747.4 581.5 1747.9 369.6 1748.4 568.2 1748.9 374.1 1749.4 569.4 1749.9 354.6 1750.4 586.3 1750.9 324.8 1751.4 562.7 1751.9 366.1 1752.4 588.2 1752.9 315.2 1753.4 568.2 1753.9 366.0 1754.4 564.6 1754.9 373.5 1755.4 563.1 1755.9 364.7 1756.4 563.9 1756.9 374.4 1757.4 562.4 1757.9 370.0 1758.4 563.6 1758.9 327.1 1759.4 594.0 1759.9 357.2 1760.4 568.3 1760.9 362.5 1761.4 568.3 1761.9 360.3 1762.4 566.7 1762.9 365.8 1763.4 572.0 1763.9 365.1 1764.4 573.2 1764.9 365.7 1765.4 576.5 1765.9 364.7 1766.4 571.3 1766.9 355.7 1767.4 573.6 1767.9 350.5 1768.4 581.3 1768.9 367.2 1769.4 569.6 1769.9 339.1 1770.4 570.7 1770.9 371.9 1771.4 568.1 1771.9 367.1 1772.4 573.9 1772.9 364.9 1773.4 591.6 1773.9 373.8 1774.4 565.0 1774.9 310.7 1775.4 568.2 1775.9 344.9 1776.4 569.2 1776.9 374.4 1777.4 592.2 1777.9 373.4 1778.4 571.1 1778.9 372.9 1779.4 577.1 1779.9 367.2 1780.4 578.9 1780.9 372.9 1781.4 570.4" stroke="#00ff00" stroke-width="1" fill="none" shape-rendering="crispEdges"/>
<path d="M288.5 52V596.5H1781.5V52.5H288" stroke="#acacac" stroke-width="1" fill="none" shape-rendering="crispEdges"/>
<path d="M281 52.5H288M289 52.5H291M281 97.5H288M289 97.5H291M281 143.5H288M289 143.5H291M281 188.5H288M289 188.5H291M281 233.5H288M289 233.5H291M281 279.5H288M289 279.5H291M281 324.5H288M289 324.5H291M281 369.5H288M289 369.5H291M281 415.5H288M289 415.5H291M281 460.5H288M289 460.5H291M281 505.5H288M289 505.5H291M281 551.5H288M289 551.5H291M281 596.5H288M289 596.5H291" stroke="#acacac" stroke-width="1" shape-rendering="crispEdges"/>
<path d="M376.5 593V600M427.5 593V600M464.5 593V600M492.5 593V600M515.5 593V600M535.5 593V600M551.5 593V600M566.5 593V600M580.5 593V604M668.5 593V600M719.5 593V600M755.5 593V600M784.5 593V600M807.5 593V600M826.5 593V600M843.5 593V600M858.5 593V600M871.5 593V604M959.5 593V600M1011.5 593V600M1047.5 593V600M1075.5 593V600M1098.5 593V600M1118.5 593V600M1135.5 593V600M1150.5 593V600M1163.5 593V604M1251.5 593V600M1302.5 593V600M1339.5 593V600M1367.5 593V600M1390.5 593V600M1410.5 593V600M1427.5 593V600M1442.5 593V600M1455.5 593V604M1543.5 593V600M1594.5 593V600M1631.5 593V600M1659.5 593V600M1682.5 593V600M1702.5 593V600M1718.5 593V600M1733.5 593V600M1747.5 593V604M288.5 596V604" stroke="#acacac" stroke-width="1" shape-rendering="crispEdges"/>
<text x="280.80" y="57" font-size="13.6" fill="#c8c8c8" stroke="#c8c8c8" stroke-width="0.4" text-anchor="end" letter-spacing="0.8" transform="translate(280.80 0) scale(0.95 1) translate(-280.80 0)">30dB</text>
<text x="280.80" y="102" font-size="13.6" fill="#c8c8c8" stroke="#c8c8c8" stroke-width="0.4" text-anchor="end" letter-spacing="0.8" transform="translate(280.80 0) scale(0.95 1) translate(-280.80 0)">0dB</text>
<text x="280.80" y="148" font-size="13.6" fill="#c8c8c8" stroke="#c8c8c8" stroke-width="0.4" text-anchor="end" letter-spacing="0.8" transform="translate(280.80 0) scale(0.95 1) translate(-280.80 0)">-30dB</text>
<text x="280.80" y="193" font-size="13.6" fill="#c8c8c8" stroke="#c8c8c8" stroke-width="0.4" text-anchor="end" letter-spacing="0.8" transform="translate(280.80 0) scale(0.95 1) translate(-280.80 0)">-60dB</text>
<text x="280.80" y="238" font-size="13.6" fill="#c8c8c8" stroke="#c8c8c8" stroke-width="0.4" text-anchor="end" letter-spacing="0.8" transform="translate(280.80 0) scale(0.95 1) translate(-280.80 0)">-90dB</text>
<text x="280.80" y="284" font-size="13.6" fill="#c8c8c8" stroke="#c8c8c8" stroke-width="0.4" text-anchor="end" letter-spacing="0.8" transform="translate(280.80 0) scale(0.95 1) translate(-280.80 0)">-120dB</text>
<text x="280.80" y="329" font-size="13.6" fill="#c8c8c8" stroke="#c8c8c8" stroke-width="0.4" text-anchor="end" letter-spacing="0.8" transform="translate(280.80 0) scale(0.95 1) translate(-280.80 0)">-150dB</text>
<text x="280.80" y="374" font-size="13.6" fill="#c8c8c8" stroke="#c8c8c8" stroke-width="0.4" text-anchor="end" letter-spacing="0.8" transform="translate(280.80 0) scale(0.95 1) translate(-280.80 0)">-180dB</text>
<text x="280.80" y="420" font-size="13.6" fill="#c8c8c8" stroke="#c8c8c8" stroke-width="0.4" text-anchor="end" letter-spacing="0.8" transform="translate(280.80 0) scale(0.95 1) translate(-280.80 0)">-210dB</text>
<text x="280.80" y="465" font-size="13.6" fill="#c8c8c8" stroke="#c8c8c8" stroke-width="0.4" text-anchor="end" letter-spacing="0.8" transform="translate(280.80 0) scale(0.95 1) translate(-280.80 0)">-240dB</text>
<text x="280.80" y="510" font-size="13.6" fill="#c8c8c8" stroke="#c8c8c8" stroke-width="0.4" text-anchor="end" letter-spacing="0.8" transform="translate(280.80 0) scale(0.95 1) translate(-280.80 0)">-270dB</text>
<text x="280.80" y="556" font-size="13.6" fill="#c8c8c8" stroke="#c8c8c8" stroke-width="0.4" text-anchor="end" letter-spacing="0.8" transform="translate(280.80 0) scale(0.95 1) translate(-280.80 0)">-300dB</text>
<text x="280.80" y="601" font-size="13.6" fill="#c8c8c8" stroke="#c8c8c8" stroke-width="0.4" text-anchor="end" letter-spacing="0.8" transform="translate(280.80 0) scale(0.95 1) translate(-280.80 0)">-330dB</text>
<text x="288.90" y="617" font-size="13.6" fill="#c8c8c8" stroke="#c8c8c8" stroke-width="0.4" text-anchor="middle" letter-spacing="0.8" transform="translate(288.90 0) scale(0.95 1) translate(-288.90 0)">100Hz</text>
<text x="580.90" y="617" font-size="13.6" fill="#c8c8c8" stroke="#c8c8c8" stroke-width="0.4" text-anchor="middle" letter-spacing="0.8" transform="translate(580.90 0) scale(0.95 1) translate(-580.90 0)">1KHz</text>
<text x="871.90" y="617" font-size="13.6" fill="#c8c8c8" stroke="#c8c8c8" stroke-width="0.4" text-anchor="middle" letter-spacing="0.8" transform="translate(871.90 0) scale(0.95 1) translate(-871.90 0)">10KHz</text>
<text x="1163.90" y="617" font-size="13.6" fill="#c8c8c8" stroke="#c8c8c8" stroke-width="0.4" text-anchor="middle" letter-spacing="0.8" transform="translate(1163.90 0) scale(0.95 1) translate(-1163.90 0)">100KHz</text>
<text x="1455.90" y="617" font-size="13.6" fill="#c8c8c8" stroke="#c8c8c8" stroke-width="0.4" text-anchor="middle" letter-spacing="0.8" transform="translate(1455.90 0) scale(0.95 1) translate(-1455.90 0)">1MHz</text>
<text x="1747.90" y="617" font-size="13.6" fill="#c8c8c8" stroke="#c8c8c8" stroke-width="0.4" text-anchor="middle" letter-spacing="0.8" transform="translate(1747.90 0) scale(0.95 1) translate(-1747.90 0)">10MHz</text>
<text x="1034.40" y="47" font-size="13.6" fill="#00ff00" stroke="#00ff00" stroke-width="0.4" text-anchor="middle" letter-spacing="0.8" transform="translate(1034.40 0) scale(0.95 1) translate(-1034.40 0)">V(33)</text>
</g>
<rect x="234" y="12" width="2" height="13" fill="#e6ded6"/>
<rect x="237" y="12" width="13" height="13" fill="#c0c0c0"/>
<rect x="236" y="12" width="1" height="16" fill="#000"/>
<rect x="234" y="25" width="16" height="1" fill="#000"/>
<rect x="234" y="26" width="16" height="2" fill="#e6ded6"/>
<rect x="234" y="13" width="2" height="1" fill="#000"/>
<rect x="234" y="16" width="2" height="1" fill="#000"/>
<rect x="234" y="19" width="2" height="1" fill="#000"/>
<rect x="234" y="22" width="2" height="1" fill="#000"/>
<rect x="236" y="26" width="1" height="2" fill="#000"/>
<rect x="239" y="26" width="1" height="2" fill="#000"/>
<rect x="242" y="26" width="1" height="2" fill="#000"/>
<rect x="245" y="26" width="1" height="2" fill="#000"/>
<rect x="248" y="26" width="1" height="2" fill="#000"/>
<path d="M237.2 20.6 240.4 17.2 242.2 17.2 244.6 19.6 246.2 19.6 249.4 16.0" stroke="#ff0000" stroke-width="2" fill="none" stroke-linejoin="round"/>
<text x="254" y="24.7" font-size="12.55" fill="#000" stroke="#000" stroke-width="0.15">железо мост.fft</text>
<rect x="8" y="13" width="2" height="13" fill="#e6ded6"/>
<rect x="11" y="13" width="13" height="13" fill="#c0c0c0"/>
<rect x="10" y="13" width="1" height="16" fill="#000"/>
<rect x="8" y="26" width="16" height="1" fill="#000"/>
<rect x="8" y="27" width="16" height="2" fill="#e6ded6"/>
<rect x="8" y="14" width="2" height="1" fill="#000"/>
<rect x="8" y="17" width="2" height="1" fill="#000"/>
<rect x="8" y="20" width="2" height="1" fill="#000"/>
<rect x="8" y="23" width="2" height="1" fill="#000"/>
<rect x="10" y="27" width="1" height="2" fill="#000"/>
<rect x="13" y="27" width="1" height="2" fill="#000"/>
<rect x="16" y="27" width="1" height="2" fill="#000"/>
<rect x="19" y="27" width="1" height="2" fill="#000"/>
<rect x="22" y="27" width="1" height="2" fill="#000"/>
<path d="M11.2 21.6 14.4 18.2 16.2 18.2 18.6 20.6 20.2 20.6 23.4 17.0" stroke="#ff0000" stroke-width="2" fill="none" stroke-linejoin="round"/>
<text x="28" y="25.6" font-size="12.1" fill="#8d8d8f">железо мост</text>
<path d="M10 478.5H14" stroke="#0000ff" stroke-width="1.2"/>
<rect x="13" y="474" width="2.2" height="9" fill="#0000ff"/>
<path d="M15 476L20 471M15 481L20.5 486.5" stroke="#0000ff" stroke-width="1.2"/>
<path d="M16 484.8L19 483L19.5 486Z" fill="#0000ff"/>
<text x="28" y="483.8" font-size="12.1" fill="#8d8d8f">железо мост</text>
<linearGradient id="gBtn" x1="0" y1="0" x2="0" y2="1"><stop offset="0" stop-color="#cddcee"/><stop offset="0.45" stop-color="#c2d4ea"/><stop offset="0.46" stop-color="#9cb5d1"/><stop offset="1" stop-color="#bcd1e8"/></linearGradient>
<rect x="1744.5" y="11.5" width="31" height="17" rx="3" fill="url(#gBtn)" stroke="#56627a" stroke-width="1"/>
<rect x="1745.5" y="12.5" width="29" height="15" rx="2" fill="none" stroke="#eaf2fb" stroke-opacity=".85" stroke-width="1"/>
<rect x="1754.5" y="19.5" width="10" height="4" rx="1.2" fill="#eeeeee" stroke="#3d4350" stroke-width="1"/>
<rect x="1778.5" y="11.5" width="31" height="17" rx="3" fill="url(#gBtn)" stroke="#56627a" stroke-width="1"/>
<rect x="1779.5" y="12.5" width="29" height="15" rx="2" fill="none" stroke="#eaf2fb" stroke-opacity=".85" stroke-width="1"/>
<rect x="1788.5" y="15.5" width="10" height="8" rx="1.2" fill="#f2f2f2" stroke="#3d4350" stroke-width="1"/>
<rect x="1791.5" y="18.5" width="4" height="2" fill="#9fbad6" stroke="#3d4350" stroke-width="1"/>
<g shape-rendering="crispEdges">
<path d="M950.5 641V635.5H991.5V656M1018.5 632V656M1055.5 632V656M1064.5 632V656" stroke="#0000ff" stroke-width="1" fill="none"/>
<path d="M1086.5 632V637M1337.5 632V637M1359.5 632V656M1368.5 632V656M1405.5 632V656M1432.5 656V635.5H1473.5V641" stroke="#0000ff" stroke-width="1" fill="none"/>
</g>
<circle cx="991.5" cy="635.5" r="1.6" fill="#0000ff"/>
<circle cx="1432.5" cy="635.5" r="1.6" fill="#0000ff"/>
<circle cx="950.5" cy="649.5" r="8.5" fill="none" stroke="#000080" stroke-width="1"/>
<path d="M947.5 645.5H953.5M950.5 642.5V648.5" stroke="#000080" stroke-width="1"/>
<circle cx="1473.5" cy="649.5" r="8.5" fill="none" stroke="#000080" stroke-width="1"/>
<path d="M1470.5 645.5H1476.5M1473.5 654V656" stroke="#000080" stroke-width="1"/>
<rect x="1083.5" y="637.5" width="7" height="19" fill="none" stroke="#000080" stroke-width="1"/>
<rect x="1333.5" y="637.5" width="7" height="19" fill="none" stroke="#000080" stroke-width="1"/>
<circle cx="1198" cy="661" r="7" fill="none" stroke="#000080" stroke-width="1"/>
<text x="962" y="650" font-weight="bold" fill="#000" font-size="6.5">V6</text>
<text x="1092" y="643.5" font-weight="bold" fill="#000" font-size="6.5">R7</text>
<text x="1092" y="654" font-weight="bold" fill="#000" font-size="6.5">50</text>
<text x="1332" y="644.5" font-weight="bold" fill="#000" font-size="6.5" text-anchor="end">R9</text>
<text x="1332" y="654.5" font-weight="bold" fill="#000" font-size="6.5" text-anchor="end">50</text>
<text x="1207" y="652" font-weight="bold" fill="#000" font-size="5">+</text>
<text transform="translate(1188 653) rotate(-90)" font-weight="bold" fill="#000" font-size="5">E1</text>
<text x="1484" y="645" font-weight="bold" fill="#000" font-size="6">AC 1 1</text>
<text x="1484" y="650.5" font-weight="bold" fill="#000" font-size="6">SINE(0 1 19000)</text>
<text x="1484" y="656.5" font-weight="bold" fill="#000" font-size="6">V1</text>
</svg></body></html>
